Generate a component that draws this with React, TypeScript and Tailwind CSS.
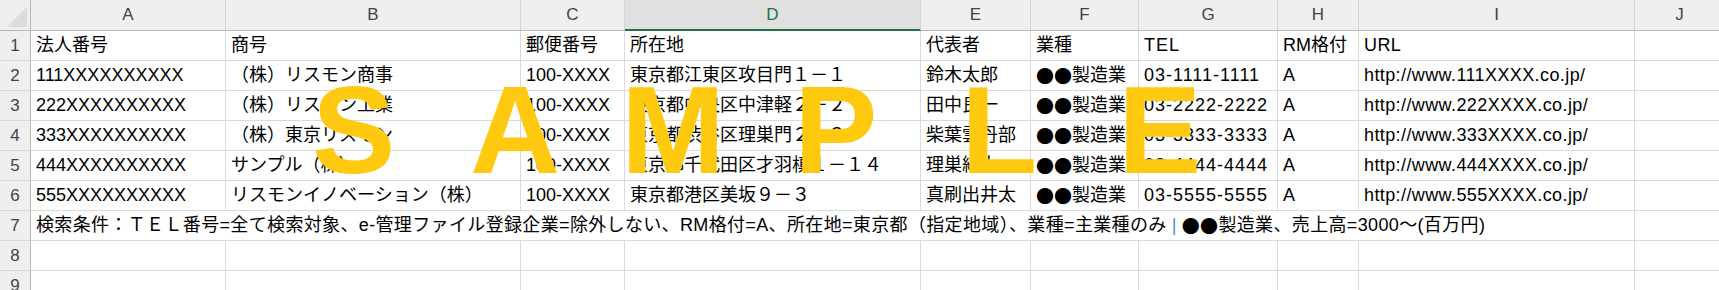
const letters = ["A", "B", "C", "D", "E", "F", "G", "H", "I", "J"];

const rows = [
  ["法人番号", "商号", "郵便番号", "所在地", "代表者", "業種", "TEL", "RM格付", "URL"],
  ["111XXXXXXXXXX", "（株）リスモン商事", "100-XXXX", "東京都江東区攻目門１－１", "鈴木太郎", "●●製造業", "03-1111-1111", "A", "http://www.111XXXX.co.jp/"],
  ["222XXXXXXXXXX", "（株）リスモン工業", "100-XXXX", "東京都中央区中津軽２－２", "田中良一", "●●製造業", "03-2222-2222", "A", "http://www.222XXXX.co.jp/"],
  ["333XXXXXXXXXX", "（株）東京リスモン", "100-XXXX", "東京都渋谷区理巣門２－３", "柴葉雲丹部", "●●製造業", "03-3333-3333", "A", "http://www.333XXXX.co.jp/"],
  ["444XXXXXXXXXX", "サンプル（株）", "100-XXXX", "東京都千代田区才羽槙１－１４", "理巣綿太", "●●製造業", "03-4444-4444", "A", "http://www.444XXXX.co.jp/"],
  ["555XXXXXXXXXX", "リスモンイノベーション（株）", "100-XXXX", "東京都港区美坂９－３", "真刷出井太", "●●製造業", "03-5555-5555", "A", "http://www.555XXXX.co.jp/"],
];

// Latin glyphs in the sheet run a little wider than Liberation Sans
const tracking = ["", "", "", "", "", "", "tracking-[1px]", "", "tracking-[0.4px]"];

// watermark letters, left edge of each glyph box
const watermark = [
  { ch: "S", left: "left-[312px]" },
  { ch: "A", left: "left-[470px]" },
  { ch: "M", left: "left-[621px]" },
  { ch: "P", left: "left-[794px]" },
  { ch: "L", left: "left-[961px]" },
  { ch: "E", left: "left-[1118px]" },
];

const Text = ({ value }: { value: string }) => {
  if (!value.startsWith("●●")) return <>{value}</>;
  return (
    <>
      <span className="font-['Noto_Sans_CJK_JP',sans-serif]">●●</span>
      {value.slice(2)}
    </>
  );
};

const cellCls =
  "h-[30px] border-r border-b border-[#dadada] pl-[5px] flex items-center whitespace-nowrap overflow-hidden";
const rowHeadCls =
  "h-[30px] bg-[#efefef] border-r border-r-[#b8b8b8] border-b border-b-[#d9d9d9] flex items-center justify-center text-[#444] text-[17px]";

export default function App() {
  return (
    <div className="relative w-[1719px] h-[290px] overflow-hidden bg-white text-[18px] text-black font-['Liberation_Sans','Noto_Sans_CJK_JP',sans-serif]">
      <div className="grid grid-cols-[31px_195px_295px_104px_296px_110px_108px_139px_81px_276px_90px]">
        {/* column headers */}
        <div className="h-[31px] bg-[#efefef] border-r border-r-[#b8b8b8] border-b border-b-[#b8b8b8] relative">
          <svg className="absolute left-[7px] top-[7px]" width="20" height="20" viewBox="0 0 20 20">
            <polygon points="20,0 20,20 0,20" fill="#dcdcdc" />
          </svg>
        </div>
        {letters.map((l) =>
          l === "D" ? (
            <div
              key={l}
              className="h-[31px] bg-[#e0e0e0] border-r border-r-[#d4d4d4] border-b-2 border-b-[#217346] flex items-center justify-center text-[#217346] text-[17px]"
            >
              {l}
            </div>
          ) : (
            <div
              key={l}
              className="h-[31px] bg-[#efefef] border-r border-r-[#d4d4d4] border-b border-b-[#b8b8b8] flex items-center justify-center text-[#444] text-[17px]"
            >
              {l}
            </div>
          )
        )}

        {/* data rows 1-6 */}
        {rows.map((row, i) => (
          <div key={i} className="contents">
            <div className={rowHeadCls}>{i + 1}</div>
            {row.map((v, j) => (
              <div key={j} className={`${cellCls} ${tracking[j]}`}>
                <Text value={v} />
              </div>
            ))}
            <div className={cellCls}></div>
          </div>
        ))}

        {/* row 7: search condition spilling over */}
        <div className={rowHeadCls}>7</div>
        <div className={`${cellCls} col-span-9 tracking-[0.35px]`}>
          検索条件：ＴＥＬ番号=全て検索対象、e-管理ファイル登録企業=除外しない、RM格付=A、所在地=東京都（指定地域）、業種=主業種のみ
          <span className="text-[#4a8fd6] font-['Liberation_Sans',sans-serif] px-[5px]">|</span>
          <span className="font-['Noto_Sans_CJK_JP',sans-serif]">●●</span>製造業、売上高=3000～(百万円)
        </div>
        <div className={cellCls}></div>

        {/* empty rows 8-9 */}
        {[8, 9].map((n) => (
          <div key={n} className="contents">
            <div className={rowHeadCls}>{n}</div>
            {letters.map((l) => (
              <div key={l} className={cellCls}></div>
            ))}
          </div>
        ))}
      </div>

      {/* SAMPLE watermark */}
      {watermark.map((w) => (
        <span
          key={w.ch}
          className={`absolute top-[67px] ${w.left} text-[125px] leading-none font-bold text-[#fec90f] font-['Liberation_Sans',sans-serif] pointer-events-none`}
        >
          {w.ch}
        </span>
      ))}
    </div>
  );
}
